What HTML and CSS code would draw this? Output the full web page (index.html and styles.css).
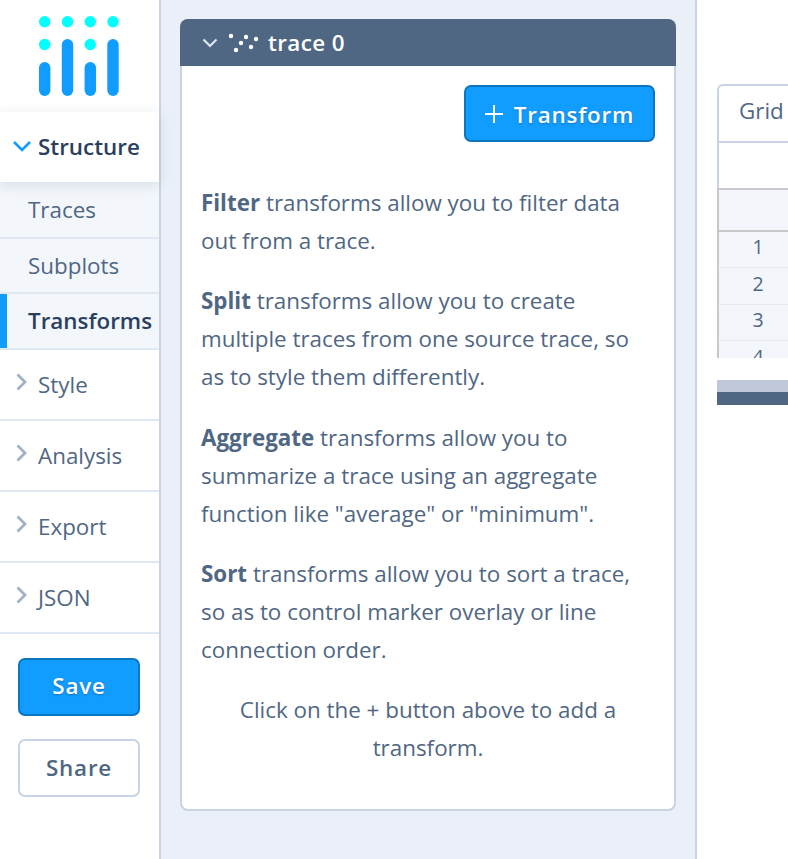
FILE: index.html
```html
<!DOCTYPE html>
<html lang="en">
<head>
  <meta charset="UTF-8" />
  <title>Chart Studio - Transforms</title>
  <link rel="stylesheet" href="styles.css">
</head>
<body>
  <nav class="sidebar">
    <div class="logo">
      <svg width="80" height="80" viewBox="0 0 80 80">
        <g fill="#00ffff">
          <circle cx="5.7" cy="5.7" r="5.7"/>
          <circle cx="28.5" cy="5.7" r="5.7"/>
          <circle cx="51.3" cy="5.7" r="5.7"/>
          <circle cx="74" cy="5.7" r="5.7"/>
          <circle cx="5.7" cy="28.5" r="5.7"/>
          <circle cx="51.3" cy="28.5" r="5.7"/>
        </g>
        <g fill="#119dff">
          <rect x="0" y="46" width="11.4" height="34" rx="5.7"/>
          <rect x="22.8" y="23" width="11.4" height="57" rx="5.7"/>
          <rect x="45.6" y="46" width="11.4" height="34" rx="5.7"/>
          <rect x="68.3" y="23" width="11.4" height="57" rx="5.7"/>
        </g>
      </svg>
    </div>
    <div class="group group-open">
      <svg class="chev" width="18" height="12" viewBox="0 0 18 12"><path d="M1 2l8 8 8-8" fill="none" stroke="#119dff" stroke-width="2.6"/></svg>
      Structure
    </div>
    <div class="sub sub-first">Traces</div>
    <div class="sub sub-mid">Subplots</div>
    <div class="sub sub-active">Transforms</div>
    <div class="group"><svg class="chev" width="12" height="18" viewBox="0 0 12 18"><path d="M1.5 1.5l7.5 7.5-7.5 7.5" fill="none" stroke="#a2b1c6" stroke-width="2.8"/></svg>Style</div>
    <div class="group"><svg class="chev" width="12" height="18" viewBox="0 0 12 18"><path d="M1.5 1.5l7.5 7.5-7.5 7.5" fill="none" stroke="#a2b1c6" stroke-width="2.8"/></svg>Analysis</div>
    <div class="group"><svg class="chev" width="12" height="18" viewBox="0 0 12 18"><path d="M1.5 1.5l7.5 7.5-7.5 7.5" fill="none" stroke="#a2b1c6" stroke-width="2.8"/></svg>Export</div>
    <div class="group"><svg class="chev" width="12" height="18" viewBox="0 0 12 18"><path d="M1.5 1.5l7.5 7.5-7.5 7.5" fill="none" stroke="#a2b1c6" stroke-width="2.8"/></svg>JSON</div>
    <div class="actions">
      <button class="btn btn-primary">Save</button>
      <button class="btn btn-plain">Share</button>
    </div>
  </nav>

  <main class="panel">
    <section class="card">
      <header class="card-head">
        <svg class="head-chev" width="16" height="10" viewBox="0 0 16 10"><path d="M1.5 1.5l6.5 6.5 6.5-6.5" fill="none" stroke="#dfe8f3" stroke-width="2.2"/></svg>
        <svg class="scatter" width="30" height="20" viewBox="0 0 30 20" fill="#fff">
          <circle cx="2" cy="3" r="2.2"/>
          <circle cx="17" cy="4" r="2.2"/>
          <circle cx="27" cy="6" r="2.2"/>
          <circle cx="12" cy="10" r="2.2"/>
          <circle cx="22" cy="14" r="2.2"/>
          <circle cx="7" cy="17" r="2.2"/>
        </svg>
        <span class="trace-name">trace 0</span>
      </header>
      <div class="card-body">
        <div class="card-tools">
          <button class="btn btn-primary btn-add">
            <svg width="18" height="18" viewBox="0 0 18 18"><path d="M9 0v18M0 9h18" stroke="#fff" stroke-width="2"/></svg>
            Transform
          </button>
        </div>
        <p><strong>Filter</strong> transforms allow you to filter data out from a trace.</p>
        <p><strong>Split</strong> transforms allow you to create multiple traces from one source trace, so as to style them differently.</p>
        <p><strong>Aggregate</strong> transforms allow you to summarize a trace using an aggregate function like "average" or "minimum".</p>
        <p><strong>Sort</strong> transforms allow you to sort a trace, so as to control marker overlay or line connection order.</p>
        <p class="hint">Click on the + button above to add a transform.</p>
      </div>
    </section>
  </main>

  <aside class="preview">
    <div class="grid-clip">
      <div class="grid-tab">Grid</div>
      <div class="grid-blank"></div>
      <div class="grid-head"></div>
      <div class="grid-row">1</div>
      <div class="grid-row">2</div>
      <div class="grid-row">3</div>
      <div class="grid-row">4</div>
    </div>
    <div class="scroll-track"></div>
    <div class="scroll-thumb"></div>
  </aside>
</body>
</html>
```

FILE: styles.css
```css
* {
  box-sizing: border-box;
}

html, body {
  height: 859px;
  overflow: hidden;
}

body {
  margin: 0;
  display: flex;
  background: #fff;
  font-family: "Open Sans", sans-serif;
  color: #506784;
}

.sidebar {
  width: 161px;
  flex: none;
  height: 859px;
  border-right: 2px solid #c8d4e3;
  background: #fff;
}

.logo {
  height: 112px;
  padding: 16px 0 0 39px;
}

.logo svg {
  display: block;
}

.group {
  height: 71px;
  display: flex;
  align-items: center;
  padding: 0 0 0 16px;
  border-bottom: 2px solid #dfe8f3;
  font-size: 22.4px;
}

.group .chev {
  width: 12px;
  margin-right: 10px;
  margin-top: -6px;
}

.group-open {
  height: 70px;
  padding: 0 0 2px 13px;
  color: #2a3f5f;
  font-weight: 600;
  border-bottom: 0;
  position: relative;
  box-shadow: 0 3px 12px rgba(80, 103, 132, 0.18);
}

.group-open .chev {
  width: 18px;
  margin-right: 7px;
  margin-top: 0;
}

.sub {
  height: 56px;
  display: flex;
  align-items: center;
  padding-left: 28px;
  background: #f3f6fb;
  border-bottom: 2px solid #dfe8f3;
  font-size: 22.4px;
}

.sub-first {
  height: 57px;
}

.sub-mid {
  height: 55px;
}

.sub-active {
  padding-bottom: 2px;
  color: #2a3f5f;
  font-weight: 600;
  box-shadow: inset 7px 0 0 #119dff;
}

.actions {
  display: flex;
  flex-direction: column;
  gap: 23.4px;
  padding: 24px 0 0 18px;
}

.actions .btn-primary {
  padding-bottom: 2px;
}

.btn {
  font-family: inherit;
  font-size: 22.4px;
  font-weight: 600;
  letter-spacing: 0.8px;
  border-radius: 7px;
  width: 122px;
  height: 57.6px;
  padding: 0;
  display: block;
}

.btn-primary {
  background: #119dff;
  border: 2px solid #0d76bf;
  color: #fff;
  text-shadow: 0 1px 2px rgba(42, 63, 95, 0.45);
}

.btn-plain {
  background: #fff;
  border: 2px solid #c8d4e3;
  color: #506784;
}

.panel {
  width: 536px;
  flex: none;
  height: 859px;
  padding: 19px 19px 0;
  background: #ebf0f8;
  border-right: 2px solid #c8d4e3;
}

.card {
  height: 792px;
  background: #fff;
  border: 2px solid #c8d4e3;
  border-top: 0;
  border-radius: 8px;
}

.card-head {
  height: 47px;
  margin: 0 -2px;
  display: flex;
  align-items: center;
  background: #506784;
  border-radius: 8px 8px 0 0;
  color: #fff;
  font-size: 22.4px;
  font-weight: 600;
}

.head-chev {
  margin: 0 11px 0 22px;
}

.scatter {
  margin-right: 9px;
  margin-top: 1px;
}

.trace-name {
  letter-spacing: 0.4px;
}

.card-body {
  padding: 0 19px;
  font-size: 22.4px;
  line-height: 38.08px;
}

.card-tools {
  display: flex;
  justify-content: flex-end;
  padding: 19px 0 41.5px;
}

.btn-add {
  width: 191px;
  height: 57px;
  display: flex;
  align-items: center;
  justify-content: center;
  gap: 11px;
  padding-top: 1px;
}

.card-body p {
  margin: 0 0 22.4px;
}

.card-body .hint {
  margin-top: -1.2px;
  text-align: center;
}

.preview {
  flex: 1;
  min-width: 0;
  padding: 84px 0 0 20px;
}

.grid-clip {
  height: 274px;
  overflow: hidden;
}

.grid-tab {
  height: 57px;
  padding: 9px 0 0 20px;
  border: 2px solid #c8d4e3;
  border-right: 0;
  border-bottom: 0;
  border-top-left-radius: 6px;
  font-size: 22.4px;
}

.grid-blank {
  height: 47px;
  border-top: 2px solid #c8d4e3;
  border-left: 2px solid #c8d4e3;
}

.grid-head {
  height: 43.6px;
  background: #f3f6fb;
  border-top: 2px solid #c8c8c8;
  border-bottom: 2px solid #c8c8c8;
  border-left: 2px solid #c8c8c8;
}

.grid-row {
  height: 36.5px;
  width: 80px;
  padding-bottom: 5px;
  display: flex;
  align-items: center;
  justify-content: center;
  background: #f3f6fb;
  border-left: 2px solid #c8c8c8;
  border-bottom: 1px solid #e8e8e8;
  font-size: 19.5px;
}

.scroll-track {
  height: 12px;
  margin-top: 22px;
  background: #bec8d9;
}

.scroll-thumb {
  height: 13px;
  background: #506784;
}
```
